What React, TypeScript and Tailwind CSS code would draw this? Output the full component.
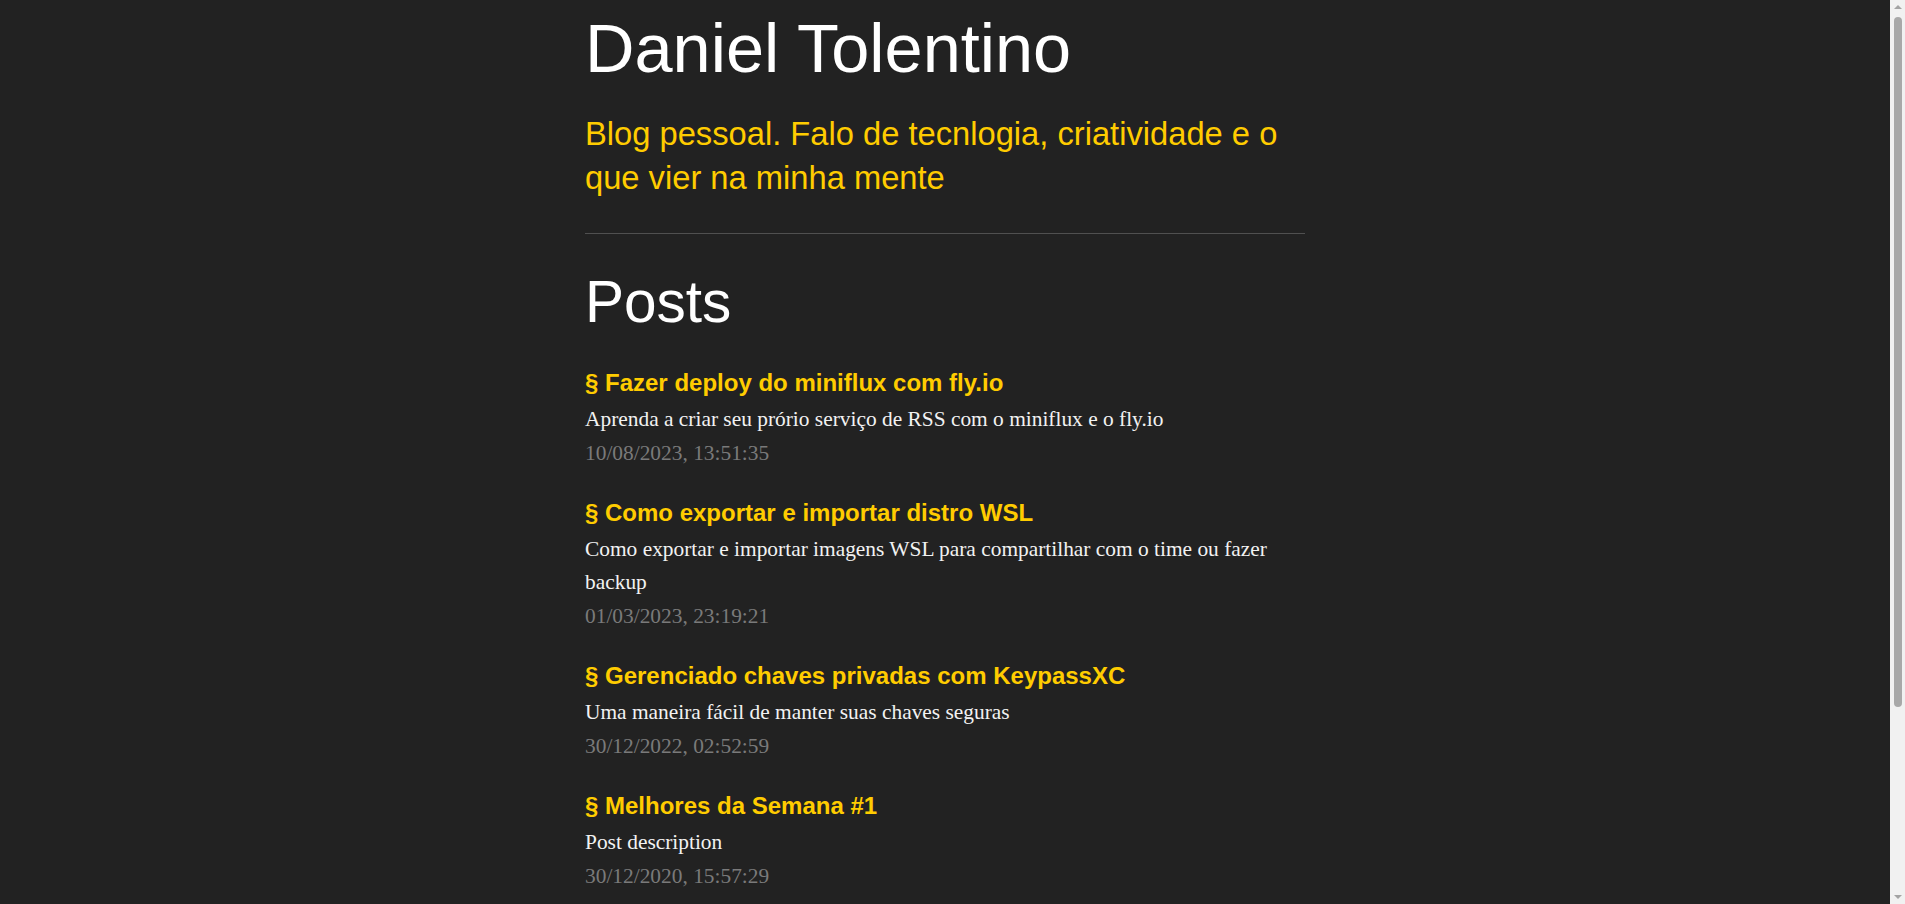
import React from "react";

const posts = [
  {
    title: "Fazer deploy do miniflux com fly.io",
    desc: "Aprenda a criar seu prório serviço de RSS com o miniflux e o fly.io",
    date: "10/08/2023, 13:51:35",
  },
  {
    title: "Como exportar e importar distro WSL",
    desc: "Como exportar e importar imagens WSL para compartilhar com o time ou fazer backup",
    date: "01/03/2023, 23:19:21",
  },
  {
    title: "Gerenciado chaves privadas com KeypassXC",
    desc: "Uma maneira fácil de manter suas chaves seguras",
    date: "30/12/2022, 02:52:59",
  },
  {
    title: "Melhores da Semana #1",
    desc: "Post description",
    date: "30/12/2020, 15:57:29",
  },
];

export default function App() {
  return (
    <div className="flex h-screen overflow-hidden bg-[#222222] text-white">
      <div className="min-w-0 flex-1">
        <div className="mx-auto w-[720px] pt-[10px]">
          <header>
            <h1 className="font-['Liberation_Sans',Arial,sans-serif] text-[68.5px] leading-[77px] text-white">
              Daniel Tolentino
            </h1>
            <p className="mt-[25px] font-['Liberation_Sans',Arial,sans-serif] text-[32.7px] leading-[44px] text-[#ffcc00]">
              Blog pessoal. Falo de tecnlogia, criatividade e o que vier na minha mente
            </p>
          </header>
          <hr className="mt-[33px] border-0 border-t border-[#505050]" />
          <main>
            <h2 className="mt-[34px] font-['Liberation_Sans',Arial,sans-serif] text-[58.5px] leading-[67px] text-white">
              Posts
            </h2>
            <ul className="mt-[34px] flex flex-col gap-[29px]">
              {posts.map((p) => (
                <li key={p.title}>
                  <a className="block font-['Liberation_Sans',Arial,sans-serif] text-[24px] font-bold leading-[28px] text-[#ffcc00]">
                    § {p.title}
                  </a>
                  <p className="mt-[6px] font-['Liberation_Serif','Times_New_Roman',serif] text-[21.4px] leading-[33px] text-[#f2f2f2]">
                    {p.desc}
                  </p>
                  <p className="mt-[1px] font-['Liberation_Serif','Times_New_Roman',serif] text-[21.4px] leading-[33px] text-[#7a7a7a]">
                    {p.date}
                  </p>
                </li>
              ))}
            </ul>
          </main>
        </div>
      </div>
      <div className="flex h-screen w-[15px] shrink-0 flex-col items-center bg-[#f1f1f1]">
        <div className="mt-[5px] h-0 w-0 border-x-[4px] border-b-[4px] border-x-transparent border-b-[#a3a3a3]" />
        <div className="mt-[8px] h-[690px] w-[8px] rounded-full bg-[#a8a8a8]" />
        <div className="mb-[5px] mt-auto h-0 w-0 border-x-[4px] border-t-[4px] border-x-transparent border-t-[#a3a3a3]" />
      </div>
    </div>
  );
}
